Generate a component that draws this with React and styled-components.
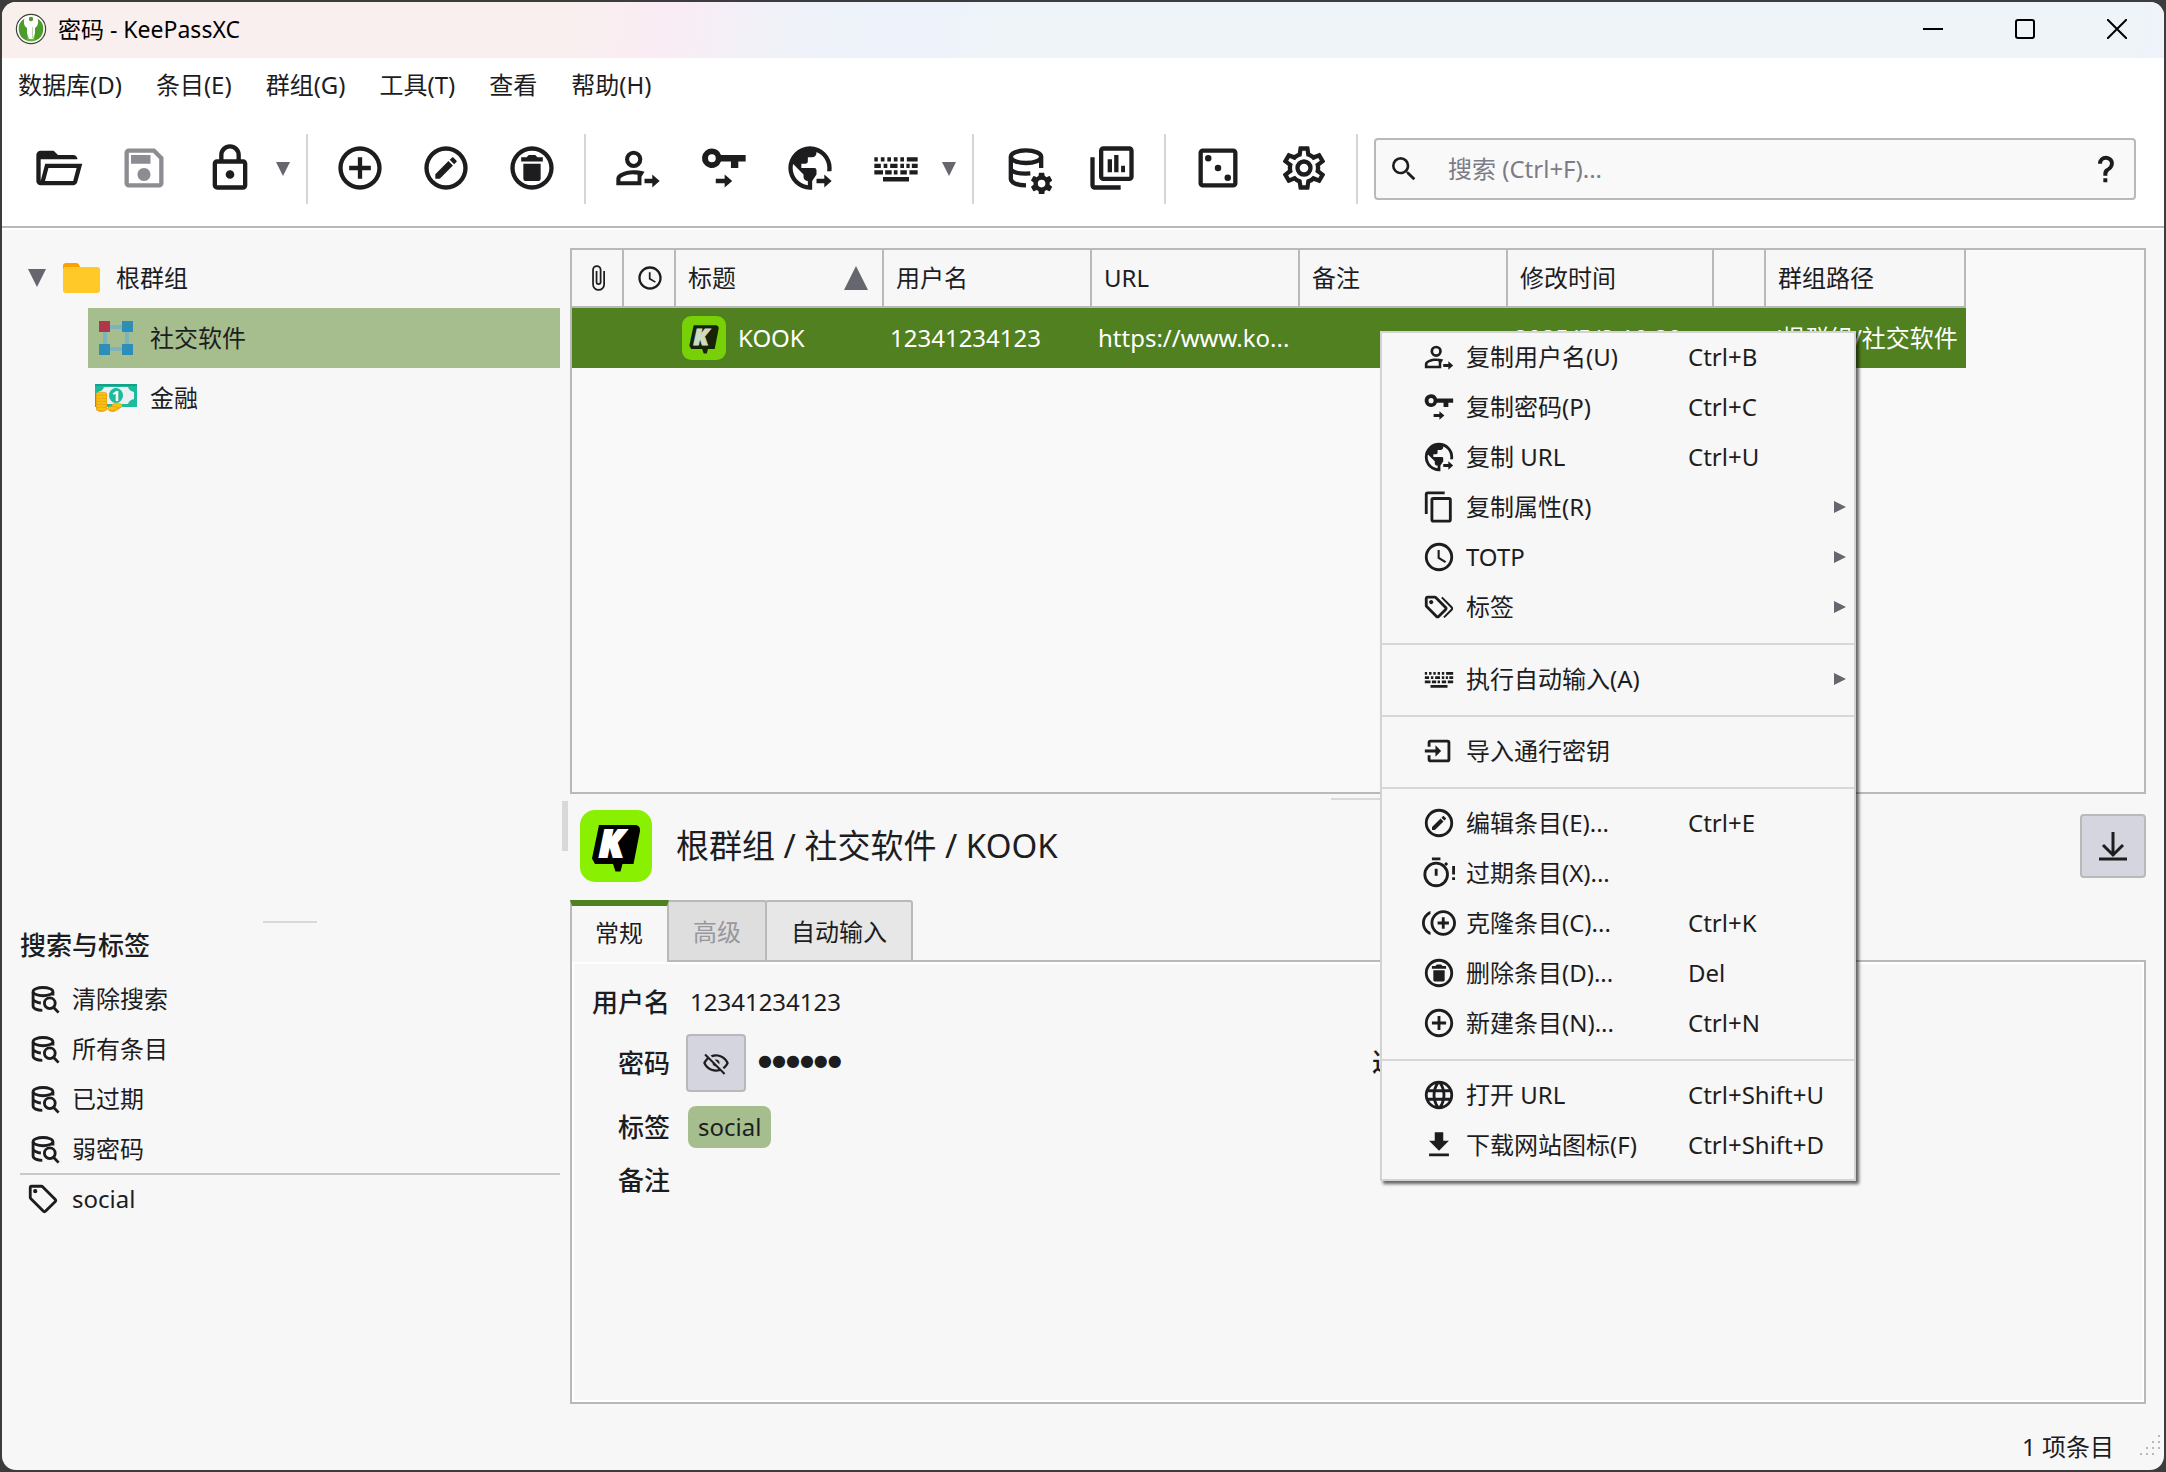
import React from 'react'
import styled, { createGlobalStyle, css } from 'styled-components'

const GlobalStyle = createGlobalStyle`
  * {
    box-sizing: border-box;
  }
  body {
    margin: 0;
    background: #3c3c3c;
    color: #1d1d1f;
    font-family: 'Noto Sans', 'Noto Sans CJK SC', sans-serif;
    font-size: 24px;
    line-height: 36px;
  }
  button, input {
    font: inherit;
    color: inherit;
  }
`

const Desktop = styled.div`
  min-height: 100vh;
  padding: 2px;
  display: flex;
`

const Window = styled.div`
  position: relative;
  flex: 1;
  min-width: 0;
  display: flex;
  flex-direction: column;
  overflow: hidden;
  border-radius: 14px;
  background: #f7f7f7;
`

const PlainButton = styled.button`
  display: flex;
  align-items: center;
  border: 0;
  padding: 0;
  background: none;
  white-space: nowrap;
  text-align: left;
`

/* title bar */

const TitleBar = styled.header`
  display: flex;
  align-items: center;
  height: 56px;
  padding: 0 1px 2px 13px;
  background: linear-gradient(100deg, #f9f0ee 0%, #f9efee 26%, #f9ecf5 31%, #f0f2f8 36%, #edf2fb 42%, #eef4f8 46%, #eef4f8 98%, #eff2fa 100%);
`

const Title = styled.h1`
  flex: 1;
  margin: 0 0 0 11px;
  font-size: 23px;
  font-weight: 400;
  color: #000;
`

const WindowButton = styled(PlainButton)`
  justify-content: center;
  width: 92px;
  height: 54px;
`

/* menu bar and tool bar */

const MenuBar = styled.nav`
  display: flex;
  height: 54px;
  background: #fff;
`

const MenuBarItem = styled(PlainButton)`
  padding: 0 18px 0 16px;
`

const ToolBar = styled.div`
  display: flex;
  align-items: center;
  height: 116px;
  padding: 0 28px 0 13px;
  background: #fff;
  border-bottom: 2px solid #b9b9b9;
  box-shadow: 0 2px 0 #fff;
`

const ToolButton = styled(PlainButton)`
  justify-content: center;
  width: 86px;
  height: 80px;
  padding-bottom: 2px;
  color: #1d1d1f;
  &:disabled {
    color: #8c8c92;
  }
`

const DropButton = styled(PlainButton)`
  width: 24px;
  height: 80px;
  padding-left: 3px;
`

const Divider = styled.div`
  width: 2px;
  height: 70px;
  margin: 0 9px;
  background: #d6d6d6;
`

const SearchBox = styled.label`
  flex: 1;
  display: flex;
  align-items: center;
  height: 62px;
  margin-left: 7px;
  padding: 0 12px;
  background: #f9f9f9;
  border: 2px solid #b9b9b9;
  border-radius: 4px;
`

const SearchInput = styled.input`
  flex: 1;
  min-width: 0;
  margin-left: 28px;
  padding: 0;
  border: 0;
  outline: 0;
  background: none;
  &::placeholder {
    color: #7c7c86;
    opacity: 1;
  }
`

/* body */

const Body = styled.div`
  flex: 1;
  display: grid;
  grid-template-columns: 540px 10px minmax(0, 1fr);
  padding: 20px 18px 0;
`

const SideColumn = styled.aside`
  display: grid;
  grid-template-rows: 7fr 2px 5fr;
`

const MainColumn = styled.main`
  display: grid;
  grid-template-rows: 91fr 10px 100fr;
  min-width: 0;
`

const Handle = styled.div`
  place-self: center;
  width: 54px;
  height: 2px;
  background: #d9d9d9;
  ${p => p.$vertical && css`
    width: 6px;
    height: 50px;
    background: #d7d7dc;
    border: 2px solid #d9d9d9;
    border-width: 0 2px;
  `}
`

const Tree = styled.div`
  display: flex;
  flex-direction: column;
`

const TreeRow = styled(PlainButton)`
  gap: 12px;
  height: 60px;
  padding-left: ${p => (p.$child ? 6 : 8)}px;
  margin-left: ${p => (p.$child ? 68 : 0)}px;
  background: ${p => (p.$selected ? '#a6be8e' : 'none')};
  > svg:first-child:not(:last-of-type) {
    margin-right: 2px;
  }
`

const TagsTitle = styled.h2`
  margin: 0 0 8px;
  font-size: 26px;
  font-weight: 500;
  line-height: 44px;
`

const TagRow = styled(PlainButton)`
  width: 100%;
  height: 50px;
  gap: 12px;
  padding-left: 6px;
  border-bottom: 2px solid ${p => (p.$last ? '#c8c8ce' : 'transparent')};
`

/* entry list */

const ListBox = styled.section`
  border: 2px solid #b9b9b9;
  background: #f9f9f9;
  overflow: hidden;
`

const Table = styled.table`
  width: 1394px;
  table-layout: fixed;
  border-collapse: separate;
  border-spacing: 0;
`

const HeadCell = styled.th`
  height: 58px;
  padding: 0 14px 0 12px;
  font-weight: 400;
  text-align: left;
  white-space: nowrap;
  background: #f7f7f7;
  border-right: 2px solid #b9b9b9;
  border-bottom: 2px solid #b9b9b9;
  ${p => p.$icon && css`
    padding: 0 10px 0 12px;
  `}
`

const HeadContent = styled.div`
  display: flex;
  align-items: center;
  justify-content: ${p => (p.$center ? 'center' : 'space-between')};
`

const Cell = styled.td`
  height: 60px;
  padding: 0 6px;
  color: #fff;
  white-space: nowrap;
  background: #50801f;
`

const TitleCell = styled.div`
  display: flex;
  align-items: center;
  gap: 12px;
`

/* entry preview */

const Preview = styled.section`
  display: flex;
  flex-direction: column;
`

const PreviewHeader = styled.div`
  display: flex;
  align-items: center;
  gap: 24px;
  padding: 6px 0 18px 10px;
`

const PreviewTitle = styled.h2`
  flex: 1;
  margin: 0;
  font-size: 33px;
  line-height: 48px;
  font-weight: 400;
`

const GreyButton = styled(PlainButton)`
  justify-content: center;
  width: ${p => p.$width}px;
  height: ${p => p.$height}px;
  background: #d5d5df;
  border: 2px solid #b9b9b9;
  border-radius: 4px;
`

const Tabs = styled.div`
  display: flex;
  margin-bottom: -2px;
`

const Tab = styled(PlainButton)`
  height: 62px;
  padding: 2px 24px 0;
  margin-left: -2px;
  background: #e7e7e7;
  border: 2px solid #b9b9b9;
  border-radius: 3px 3px 0 0;
  &:disabled {
    color: #98989c;
    background: #dedede;
  }
  ${p => p.$active && css`
    position: relative;
    margin-left: 0;
    padding: 0 24px 2px 23px;
    background: #f7f7f7;
    border-width: 6px 2px 0;
    border-top-color: #50801f;
    border-radius: 0;
  `}
`

const Pane = styled.div`
  flex: 1;
  display: grid;
  grid-template-columns: 1fr 1fr;
  align-items: start;
  padding-top: 20px;
  background: #f7f7f7;
  border: 2px solid #b9b9b9;
  box-shadow: inset 0 0 0 2px #fff;
`

const Fields = styled.dl`
  display: grid;
  grid-template-columns: 98px 1fr;
  column-gap: 16px;
  row-gap: 14px;
  align-items: center;
  margin: 0;
  padding-top: 2px;
`

const FieldName = styled.dt`
  font-size: 26px;
  font-weight: 500;
  text-align: right;
`

const FieldValue = styled.dd`
  display: flex;
  align-items: center;
  margin: 0;
  padding-left: ${p => p.$indent || 0}px;
`

const ExpiryName = styled.div`
  padding: 62px 0 0 14px;
  font-size: 26px;
  font-weight: 500;
`

const Dots = styled.span`
  margin-left: 12px;
  padding-bottom: 4px;
  font-family: 'DejaVu Sans', sans-serif;
  font-size: 16px;
`

const Tag = styled.span`
  padding: 0 10px;
  line-height: 42px;
  background: #a6be8e;
  border-radius: 8px;
`

const StatusBar = styled.footer`
  display: flex;
  align-items: center;
  justify-content: flex-end;
  height: 66px;
  padding-top: 20px;
`

const StatusText = styled.span`
  margin-right: 26px;
`

/* context menu */

const ContextMenu = styled.div`
  position: absolute;
  top: 329px;
  left: 1378px;
  width: 476px;
  padding-bottom: 8px;
  background: #f7f7f7;
  border: 2px solid #d3d3d3;
  box-shadow: 3px 3px 3px rgba(0, 0, 0, 0.6);
`

const MenuItem = styled(PlainButton)`
  width: 100%;
  height: 50px;
  padding: 0 8px 2px 40px;
`

const MenuLabel = styled.span`
  flex: 0 0 222px;
  margin-left: 10px;
`

const MenuKeys = styled.span`
  flex: 1;
`

const MenuRule = styled.div`
  height: 2px;
  margin: 10px 0;
  background: #d7d7d7;
`

/* icons */

const RING = 'M12,2A10,10 0 0,0 2,12A10,10 0 0,0 12,22A10,10 0 0,0 22,12A10,10 0 0,0 12,2M12,20C7.59,20 4,16.41 4,12C4,7.59 7.59,4 12,4C16.41,4 20,7.59 20,12C20,16.41 16.41,20 12,20Z'
const ARROW = 'M15,17H18.6V15L22,18L18.6,21V19H15Z'
const COG = 'M12,15.5A3.5,3.5 0 0,1 8.5,12A3.5,3.5 0 0,1 12,8.5A3.5,3.5 0 0,1 15.5,12A3.5,3.5 0 0,1 12,15.5M19.43,12.97C19.47,12.65 19.5,12.33 19.5,12C19.5,11.67 19.47,11.34 19.43,11L21.54,9.37C21.73,9.22 21.78,8.95 21.66,8.73L19.66,5.27C19.54,5.05 19.27,4.96 19.05,5.05L16.56,6.05C16.04,5.66 15.5,5.32 14.87,5.07L14.5,2.42C14.46,2.18 14.25,2 14,2H10C9.75,2 9.54,2.18 9.5,2.42L9.13,5.07C8.5,5.32 7.96,5.66 7.44,6.05L4.95,5.05C4.73,4.96 4.46,5.05 4.34,5.27L2.34,8.73C2.21,8.95 2.27,9.22 2.46,9.37L4.57,11C4.53,11.34 4.5,11.67 4.5,12C4.5,12.33 4.53,12.65 4.57,12.97L2.46,14.63C2.27,14.78 2.21,15.05 2.34,15.27L4.34,18.73C4.46,18.95 4.73,19.03 4.95,18.95L7.44,17.94C7.96,18.34 8.5,18.68 9.13,18.93L9.5,21.58C9.54,21.82 9.75,22 10,22H14C14.25,22 14.46,21.82 14.5,21.58L14.87,18.93C15.5,18.67 16.04,18.34 16.56,17.94L19.05,18.95C19.27,19.03 19.54,18.95 19.66,18.73L21.66,15.27C21.78,15.05 21.73,14.78 21.54,14.63L19.43,12.97Z'

const PATHS = {
  open: 'M6.1,10L4,18V8H21A2,2 0 0,0 19,6H12L10,4H4A2,2 0 0,0 2,6V18A2,2 0 0,0 4,20H19C19.9,20 20.7,19.4 20.9,18.5L23.2,10H6.1M19,18H6L7.6,12H20.6L19,18Z',
  save: 'M17 3H5C3.89 3 3 3.9 3 5V19C3 20.1 3.89 21 5 21H19C20.1 21 21 20.1 21 19V7L17 3M19 19H5V5H16.17L19 7.83V19M12 12C10.34 12 9 13.34 9 15S10.34 18 12 18 15 16.66 15 15 13.66 12 12 12M6 6H15V10H6V6Z',
  lock: 'M12,17C10.89,17 10,16.1 10,15C10,13.89 10.89,13 12,13A2,2 0 0,1 14,15A2,2 0 0,1 12,17M18,20V10H6V20H18M18,8A2,2 0 0,1 20,10V20A2,2 0 0,1 18,22H6C4.89,22 4,21.1 4,20V10C4,8.89 4.89,8 6,8H7V6A5,5 0 0,1 12,1A5,5 0 0,1 17,6V8H18M12,3A3,3 0 0,0 9,6V8H15V6A3,3 0 0,0 12,3Z',
  add: RING + 'M13,7H11V11H7V13H11V17H13V13H17V11H13V7Z',
  edit: RING + 'M15.1,7.07C15.24,7.07 15.38,7.12 15.5,7.23L16.77,8.5C17,8.72 17,9.07 16.77,9.28L15.77,10.28L13.72,8.23L14.72,7.23C14.82,7.12 14.96,7.07 15.1,7.07M13.13,8.81L15.19,10.87L9.13,16.93H7.07V14.87L13.13,8.81Z',
  trash: RING + 'M17,7H14.5L13.5,6H10.5L9.5,7H7V9H17V7M9,18H15A1,1 0 0,0 16,17V10H8V17A1,1 0 0,0 9,18Z',
  user: 'M10,4A4,4 0 1,0 10,12A4,4 0 1,0 10,4M10,5.9A2.1,2.1 0 1,1 10,10.1A2.1,2.1 0 1,1 10,5.9ZM9.5,13C11.5,13 13.3,13.2 15,13.7L13.6,16V20H2V17C2,14.3 6.8,13 9.5,13M9.5,14.9C6.9,14.9 3.9,16.3 3.9,17V18.1H11.8V15.1C11.1,15 10.4,14.9 9.5,14.9Z' + ARROW,
  key: 'M6.4,3A4.5,4.5 0 0,1 10.6,6H22V9H18.6V12H15.2V9H10.6A4.5,4.5 0 1,1 6.4,3M6.4,5.7A1.8,1.8 0 1,0 6.4,9.3A1.8,1.8 0 1,0 6.4,5.7ZM8.2,17H12.3V15L15.8,18L12.3,21V19H8.2Z',
  url: 'M12,2A10,10 0 0,0 2,12A10,10 0 0,0 12,22H13V18L15,15V13A1,1 0 0,0 14,12H8V10H10A1,1 0 0,0 11,9V7H13A2,2 0 0,0 15,5V4.59C17.93,5.77 20,8.64 20,12L19.9,13.5H21.9L22,12A10,10 0 0,0 12,2ZM11,19.93C7.05,19.44 4,16.08 4,12C4,11.38 4.08,10.78 4.21,10.21L9,15V16A2,2 0 0,0 11,18Z' + ARROW,
  keyboard: 'M2,7h1.6v2h-1.6zM5,7h1.7v2h-1.7zM8,7h1.7v2h-1.7zM11,7h1.7v2h-1.7zM14,7h1.7v2h-1.7zM17,7h5v2h-5zM2,10h3v2h-3zM6.3,10h1.7v2h-1.7zM9.3,10h3.4v2h-3.4zM14,10h1.7v2h-1.7zM16.8,10h1.5v2h-1.5zM19.3,10h2.7v2h-2.7zM2,13h4v2h-4zM7,13h3v2h-3zM11,13h1.7v2h-1.7zM14,13h3v2h-3zM18.2,13h3.8v2h-3.8zM6,16.2h12v2h-12z',
  reports: 'M8,2H20A2,2 0 0,1 22,4V16A2,2 0 0,1 20,18H8A2,2 0 0,1 6,16V4A2,2 0 0,1 8,2M8,4V16H20V4H8ZM2,7H4V20H16V22H4A2,2 0 0,1 2,20ZM10,8H12V14H10ZM13,6H15V14H13ZM16.2,11H18V14H16.2Z',
  dice: 'M5,3H19A2,2 0 0,1 21,5V19A2,2 0 0,1 19,21H5A2,2 0 0,1 3,19V5A2,2 0 0,1 5,3M5,5V19H19V5H5M7.5,6A1.5,1.5 0 1,1 7.5,9A1.5,1.5 0 1,1 7.5,6M12,10.5A1.5,1.5 0 1,1 12,13.5A1.5,1.5 0 1,1 12,10.5M16.5,15A1.5,1.5 0 1,1 16.5,18A1.5,1.5 0 1,1 16.5,15Z',
  settings: 'M12,8A4,4 0 0,1 16,12A4,4 0 0,1 12,16A4,4 0 0,1 8,12A4,4 0 0,1 12,8M12,10A2,2 0 0,0 10,12A2,2 0 0,0 12,14A2,2 0 0,0 14,12A2,2 0 0,0 12,10M10,22C9.75,22 9.54,21.82 9.5,21.58L9.13,18.93C8.5,18.68 7.96,18.34 7.44,17.94L4.95,18.95C4.73,19.03 4.46,18.95 4.34,18.73L2.34,15.27C2.21,15.05 2.27,14.78 2.46,14.63L4.57,12.97L4.5,12L4.57,11L2.46,9.37C2.27,9.22 2.21,8.95 2.34,8.73L4.34,5.27C4.46,5.05 4.73,4.96 4.95,5.05L7.44,6.05C7.96,5.66 8.5,5.32 9.13,5.07L9.5,2.42C9.54,2.18 9.75,2 10,2H14C14.25,2 14.46,2.18 14.5,2.42L14.87,5.07C15.5,5.32 16.04,5.66 16.56,6.05L19.05,5.05C19.27,4.96 19.54,5.05 19.66,5.27L21.66,8.73C21.79,8.95 21.73,9.22 21.54,9.37L19.43,11L19.5,12L19.43,13L21.54,14.63C21.73,14.78 21.79,15.05 21.66,15.27L19.66,18.73C19.54,18.95 19.27,19.04 19.05,18.95L16.56,17.95C16.04,18.34 15.5,18.68 14.87,18.93L14.5,21.58C14.46,21.82 14.25,22 14,22H10M11.25,4L10.88,6.61C9.68,6.86 8.62,7.5 7.85,8.39L5.44,7.35L4.69,8.65L6.8,10.2C6.4,11.37 6.4,12.64 6.8,13.8L4.68,15.36L5.43,16.66L7.86,15.62C8.63,16.5 9.68,17.14 10.87,17.38L11.24,20H12.76L13.13,17.39C14.32,17.14 15.37,16.5 16.14,15.62L18.57,16.66L19.32,15.36L17.2,13.81C17.6,12.64 17.6,11.37 17.2,10.2L19.31,8.65L18.56,7.35L16.15,8.39C15.38,7.5 14.32,6.86 13.12,6.62L12.75,4H11.25Z',
  search: 'M9.5,3A6.5,6.5 0 0,1 16,9.5C16,11.11 15.41,12.59 14.44,13.73L14.71,14H15.5L20.5,19L19,20.5L14,15.5V14.71L13.73,14.44C12.59,15.41 11.11,16 9.5,16A6.5,6.5 0 0,1 3,9.5A6.5,6.5 0 0,1 9.5,3M9.5,5C7,5 5,7 5,9.5C5,12 7,14 9.5,14C12,14 14,12 14,9.5C14,7 12,5 9.5,5Z',
  help: 'M10,19H13V22H10V19M12,2C17.35,2.22 19.68,7.62 16.5,11.67C15.67,12.67 14.33,13.33 13.67,14.17C13,15 13,16 13,17H10C10,15.33 10,13.92 10.67,12.92C11.33,11.92 12.67,11.33 13.5,10.67C15.92,8.43 15.32,5.26 12,5A3,3 0 0,0 9,8H6A6,6 0 0,1 12,2Z',
  clip: 'M16.5,6V17.5A4,4 0 0,1 12.5,21.5A4,4 0 0,1 8.5,17.5V5A2.5,2.5 0 0,1 11,2.5A2.5,2.5 0 0,1 13.5,5V15.5A1,1 0 0,1 12.5,16.5A1,1 0 0,1 11.5,15.5V6H10V15.5A2.5,2.5 0 0,0 12.5,18A2.5,2.5 0 0,0 15,15.5V5A4,4 0 0,0 11,1A4,4 0 0,0 7,5V17.5A5.5,5.5 0 0,0 12.5,23A5.5,5.5 0 0,0 18,17.5V6H16.5Z',
  clock: RING + 'M12.5,7V12.25L17,14.92L16.25,16.15L11,13V7H12.5Z',
  copy: 'M19,21H8V7H19M19,5H8A2,2 0 0,0 6,7V21A2,2 0 0,0 8,23H19A2,2 0 0,0 21,21V7A2,2 0 0,0 19,5M16,1H4A2,2 0 0,0 2,3V17H4V3H16V1Z',
  tags: 'M6.5 10C7.3 10 8 9.3 8 8.5S7.3 7 6.5 7 5 7.7 5 8.5 5.7 10 6.5 10M9 6L16 13L11 18L4 11V6H9M9 4H4C2.9 4 2 4.9 2 6V11C2 11.6 2.2 12.1 2.6 12.4L9.6 19.4C9.9 19.8 10.4 20 11 20S12.1 19.8 12.4 19.4L17.4 14.4C17.8 14 18 13.5 18 13C18 12.4 17.8 11.9 17.4 11.6L10.4 4.6C10.1 4.2 9.6 4 9 4M13.5 5.7L14.5 4.7L21.4 11.6C21.8 12 22 12.5 22 13S21.8 14.1 21.4 14.4L16 19.8L15 18.8L20.7 13L13.5 5.7Z',
  tag: 'M21.41,11.58L12.41,2.58C12.04,2.21 11.53,2 11,2H4A2,2 0 0,0 2,4V11C2,11.53 2.21,12.04 2.59,12.41L11.59,21.41C11.96,21.79 12.47,22 13,22C13.53,22 14.04,21.79 14.41,21.41L21.41,14.41C21.79,14.04 22,13.53 22,13C22,12.47 21.79,11.96 21.41,11.58M13,20L4,11V4H11L20,13M6.5,5A1.5,1.5 0 1,1 5,6.5A1.5,1.5 0 0,1 6.5,5Z',
  import: 'M6,4H18A2,2 0 0,1 20,6V18A2,2 0 0,1 18,20H6A2,2 0 0,1 4,18V15H6V18H18V6H6V9H4V6A2,2 0 0,1 6,4ZM2,11H9.5V8L13.5,12L9.5,16V13H2Z',
  expire: 'M10,4A9,9 0 1,0 10,22A9,9 0 1,0 10,4M10,6A7,7 0 1,1 10,20A7,7 0 1,1 10,6ZM7,1H13V3H7ZM9,9H11V14H9ZM15.6,5.6L17,4.2L18.5,5.7L17.1,7.1ZM21.3,7H23.3V13H21.3ZM21.3,15H23.3V17H21.3Z',
  clone: 'M16,8H14V11H11V13H14V16H16V13H19V11H16M2,12C2,9.21 3.64,6.8 6,5.68V3.5C2.5,4.76 0,8.09 0,12C0,15.91 2.5,19.24 6,20.5V18.32C3.64,17.2 2,14.79 2,12M15,3C10.04,3 6,7.04 6,12C6,16.96 10.04,21 15,21C19.96,21 24,16.96 24,12C24,7.04 19.96,3 15,3M15,19C11.14,19 8,15.86 8,12C8,8.14 11.14,5 15,5C18.86,5 22,8.14 22,12C22,15.86 18.86,19 15,19Z',
  web: 'M16.36,14C16.44,13.34 16.5,12.68 16.5,12C16.5,11.32 16.44,10.66 16.36,10H19.74C19.9,10.64 20,11.31 20,12C20,12.69 19.9,13.36 19.74,14M14.59,19.56C15.19,18.45 15.65,17.25 15.97,16H18.92C17.96,17.65 16.43,18.93 14.59,19.56M14.34,14H9.66C9.56,13.34 9.5,12.68 9.5,12C9.5,11.32 9.56,10.65 9.66,10H14.34C14.43,10.65 14.5,11.32 14.5,12C14.5,12.68 14.43,13.34 14.34,14M12,19.96C11.17,18.76 10.5,17.43 10.09,16H13.91C13.5,17.43 12.83,18.76 12,19.96M8,8H5.08C6.03,6.34 7.57,5.06 9.4,4.44C8.8,5.55 8.35,6.75 8,8M5.08,16H8C8.35,17.25 8.8,18.45 9.4,19.56C7.57,18.93 6.03,17.65 5.08,16M4.26,14C4.1,13.36 4,12.69 4,12C4,11.31 4.1,10.64 4.26,10H7.64C7.56,10.66 7.5,11.32 7.5,12C7.5,12.68 7.56,13.34 7.64,14M12,4.03C12.83,5.23 13.5,6.57 13.91,8H10.09C10.5,6.57 11.17,5.23 12,4.03M18.92,8H15.97C15.65,6.75 15.19,5.55 14.59,4.44C16.43,5.07 17.96,6.34 18.92,8M12,2C6.47,2 2,6.5 2,12A10,10 0 0,0 12,22A10,10 0 0,0 22,12A10,10 0 0,0 12,2Z',
  download: 'M5,20H19V18H5M19,9H15V3H9V9H5L12,16L19,9Z',
  eyeOff: 'M2,5.27L3.28,4L20,20.72L18.73,22L15.65,18.92C14.5,19.3 13.28,19.5 12,19.5C7,19.5 2.73,16.39 1,12C1.69,10.24 2.79,8.69 4.19,7.46L2,5.27M12,9A3,3 0 0,1 15,12C15,12.35 14.94,12.69 14.83,13L11,9.17C11.31,9.06 11.65,9 12,9M12,4.5C17,4.5 21.27,7.61 23,12C22.18,14.08 20.79,15.88 19,17.19L17.58,15.76C18.94,14.82 20.06,13.54 20.82,12C19.17,8.64 15.76,6.5 12,6.5C10.91,6.5 9.84,6.68 8.84,7L7.3,5.47C8.74,4.85 10.33,4.5 12,4.5M3.18,12C4.83,15.36 8.24,17.5 12,17.5C12.69,17.5 13.37,17.43 14,17.29L11.72,15C10.29,14.85 9.15,13.71 9,12.28L5.6,8.87C4.61,9.72 3.78,10.78 3.18,12Z'
}

const Svg = styled.svg`
  display: block;
  flex: none;
`

const Icon = ({ name, size = 34 }) => (
  <Svg width={size} height={size} viewBox="0 0 24 24" fill="currentColor" fillRule="evenodd" aria-hidden="true">
    <path d={PATHS[name]} />
  </Svg>
)

const DatabaseIcon = ({ size, cog }) => (
  <Svg width={size} height={size} viewBox="0 0 24 24" fill="none" stroke="currentColor" strokeWidth="2" aria-hidden="true">
    <ellipse cx="12" cy="6.8" rx="7" ry="2.9" />
    <path d={cog ? 'M5,7V17C5,18.8 7.8,20 12,20M19,7V12M5,12.8C6,14 9,14.8 14,14.5' : 'M5,7V17C5,18.8 7.8,20 11.5,20M19,7V9.5M5,12.5C6.2,14 7.8,14.6 10.5,14.8'} />
    {cog ? (
      <g transform="translate(13.2 13.2) scale(0.5)" fill="currentColor" fillRule="evenodd" stroke="none">
        <path d={COG} />
      </g>
    ) : (
      <path d="M16.8,11.2A3.8,3.8 0 1,1 16.8,18.8A3.8,3.8 0 1,1 16.8,11.2M19.4,17.8L23,21.6" />
    )}
  </Svg>
)

const Triangle = ({ dir, size }) => (
  <Svg width={size} height={size} viewBox="0 0 10 10" fill="#65666e" aria-hidden="true">
    <path d={{ down: 'M0,0H10L5,10Z', up: 'M0,10H10L5,0Z', right: 'M0,0V10L10,5Z' }[dir]} />
  </Svg>
)

const AppLogo = () => (
  <Svg width="32" height="32" viewBox="0 0 32 32" aria-hidden="true">
    <circle cx="16" cy="16" r="14.6" fill="#fff" stroke="#3a4438" strokeWidth="1.2" />
    <path d="M9.5,5.5A12.4,12.4 0 0,0 12,27.7V15C9,13 8.2,9.5 9.5,5.5ZM22.5,5.5A12.4,12.4 0 0,1 20,27.7V15C23,13 23.8,9.5 22.5,5.5Z" fill="#4d9a2d" />
    <path d="M12,20V27.7C14.5,28.6 17.5,28.6 20,27.7V20L18,26H14Z" fill="#62b52f" />
    <circle cx="16" cy="6" r="2.2" fill="#4d9a2d" />
    <path d="M17.5,14V25" stroke="#b9d5ac" strokeWidth="1" />
  </Svg>
)

const KookLogo = ({ size, faded }) => (
  <Svg width={size} height={size} viewBox="0 0 72 72" aria-hidden="true" opacity={faded ? 0.72 : 1}>
    <rect width="72" height="72" rx="15" fill="#88f000" />
    <path d="M19,15H56Q60.500,16 60,21L53.500,54H42.500L40.500,61.500H35.500L33,54H15L12,48.500Z" fill="#000" />
    <text x="19" y="47" fill="#fff" stroke="#fff" strokeWidth="2" fontFamily="Open Sans, sans-serif" fontWeight="800" fontStyle="italic" fontSize="37">K</text>
  </Svg>
)

const FolderIcon = () => (
  <Svg width="44" height="44" viewBox="0 0 44 44" aria-hidden="true">
    <path d="M6,7H16Q19,7 20,11H37V20H3V10Q3,7 6,7Z" fill="#ffa000" />
    <rect x="3" y="11" width="37" height="26" rx="3" fill="#ffca28" />
  </Svg>
)

const NetworkIcon = () => (
  <Svg width="44" height="44" viewBox="0 0 44 44" aria-hidden="true">
    <path d="M11,11H33V33H11Z" fill="none" stroke="#7fb3bb" strokeWidth="4" />
    <path d="M28,5H39V16H28ZM5,28H16V39H5ZM28,28H39V39H28Z" fill="#2d8fb8" />
    <path d="M5,5H16V16H5Z" fill="#b0364d" />
  </Svg>
)

const MoneyIcon = () => (
  <Svg width="44" height="44" viewBox="0 0 44 44" aria-hidden="true">
    <rect x="1" y="8" width="42" height="23" fill="#1abc9c" />
    <rect x="1" y="8" width="42" height="2" fill="#16a085" />
    <path d="M10,11H34Q35,15 40,16V23Q35,24 34,28H10Q9,24 4,23V16Q9,15 10,11Z" fill="#ecf0f1" />
    <ellipse cx="22" cy="19.500" rx="7" ry="7.500" fill="#1abc9c" />
    <text x="22" y="25" textAnchor="middle" fill="#fff" fontFamily="Open Sans, sans-serif" fontWeight="700" fontSize="15">1</text>
    <path d="M2,18V34Q7,38 13,34V18Z" fill="#f39c12" />
    {[18, 21, 24, 27, 30, 33].map(y => <ellipse key={y} cx="7.500" cy={y} rx="5.500" ry="1.900" fill="#f1c40f" stroke="#f39c12" strokeWidth="0.700" />)}
    <path d="M14,32V34Q18,38 23.500,34L28,31V29L20,31Z" fill="#f39c12" />
    <ellipse cx="23" cy="29.500" rx="5" ry="2.200" fill="#f1c40f" stroke="#f39c12" strokeWidth="0.700" />
    <ellipse cx="18.500" cy="32.500" rx="5" ry="2" fill="#f1c40f" stroke="#f39c12" strokeWidth="0.700" />
  </Svg>
)

const DownIcon = () => (
  <Svg width="30" height="30" viewBox="0 0 30 30" fill="none" stroke="currentColor" strokeWidth="3" aria-hidden="true">
    <path d="M15,1V24M5,14L15,24L25,14M1,28H29" />
  </Svg>
)

const SizeGrip = () => (
  <Svg width="24" height="24" viewBox="0 0 24 24" fill="#b9b9b9" aria-hidden="true">
    {[[18, 0], [12, 6], [18, 6], [6, 12], [12, 12], [18, 12], [0, 18], [6, 18], [12, 18]].map(([x, y]) => (
      <rect key={`${x}-${y}`} x={x} y={y} width="2" height="2" />
    ))}
  </Svg>
)

const menus = ['数据库(D)', '条目(E)', '群组(G)', '工具(T)', '查看', '帮助(H)']

const columns = [
  { width: 52, icon: 'clip', name: '附件' },
  { width: 52, icon: 'clock', name: 'TOTP' },
  { width: 208, label: '标题', sorted: true },
  { width: 208, label: '用户名' },
  { width: 208, label: 'URL' },
  { width: 208, label: '备注' },
  { width: 206, label: '修改时间' },
  { width: 52 },
  { width: 200, label: '群组路径' }
]

const searches = ['清除搜索', '所有条目', '已过期', '弱密码']

const contextMenu = [
  { icon: 'user', label: '复制用户名(U)', keys: 'Ctrl+B' },
  { icon: 'key', label: '复制密码(P)', keys: 'Ctrl+C' },
  { icon: 'url', label: '复制 URL', keys: 'Ctrl+U' },
  { icon: 'copy', label: '复制属性(R)', sub: true },
  { icon: 'clock', label: 'TOTP', sub: true },
  { icon: 'tags', label: '标签', sub: true },
  null,
  { icon: 'keyboard', label: '执行自动输入(A)', sub: true },
  null,
  { icon: 'import', label: '导入通行密钥' },
  null,
  { icon: 'edit', label: '编辑条目(E)...', keys: 'Ctrl+E' },
  { icon: 'expire', label: '过期条目(X)...' },
  { icon: 'clone', label: '克隆条目(C)...', keys: 'Ctrl+K' },
  { icon: 'trash', label: '删除条目(D)...', keys: 'Del' },
  { icon: 'add', label: '新建条目(N)...', keys: 'Ctrl+N' },
  null,
  { icon: 'web', label: '打开 URL', keys: 'Ctrl+Shift+U' },
  { icon: 'download', label: '下载网站图标(F)', keys: 'Ctrl+Shift+D' }
]

const Tool = ({ name, label, disabled }) => (
  <ToolButton aria-label={label} disabled={disabled}>
    {name === 'database' ? <DatabaseIcon size={52} cog /> : <Icon name={name} size={52} />}
  </ToolButton>
)

const Drop = ({ label }) => (
  <DropButton aria-label={label}>
    <Triangle dir="down" size={14} />
  </DropButton>
)

const EntryList = () => (
  <ListBox>
    <Table>
      <colgroup>
        {columns.map((c, i) => <col key={i} width={c.width} />)}
      </colgroup>
      <thead>
        <tr>
          {columns.map((c, i) => (
            <HeadCell key={i} aria-label={c.name} $icon={!!c.icon}>
              <HeadContent $center={!!c.icon}>
                {c.icon ? <Icon name={c.icon} size={28} /> : c.label}
                {c.sorted && <Triangle dir="up" size={24} />}
              </HeadContent>
            </HeadCell>
          ))}
        </tr>
      </thead>
      <tbody>
        <tr>
          <Cell />
          <Cell />
          <Cell>
            <TitleCell>
              <KookLogo size={44} faded />
              KOOK
            </TitleCell>
          </Cell>
          <Cell>12341234123</Cell>
          <Cell>https://www.ko...</Cell>
          <Cell />
          <Cell>2025/5/2 10:20</Cell>
          <Cell />
          <Cell>/根群组/社交软件</Cell>
        </tr>
      </tbody>
    </Table>
  </ListBox>
)

const EntryPreview = () => (
  <Preview>
    <PreviewHeader>
      <KookLogo size={72} />
      <PreviewTitle>根群组 / 社交软件 / KOOK</PreviewTitle>
      <GreyButton $width={66} $height={64} aria-label="关闭预览"><DownIcon /></GreyButton>
    </PreviewHeader>
    <Tabs role="tablist">
      <Tab role="tab" aria-selected="true" $active>常规</Tab>
      <Tab role="tab" disabled>高级</Tab>
      <Tab role="tab">自动输入</Tab>
    </Tabs>
    <Pane>
      <Fields>
        <FieldName>用户名</FieldName>
        <FieldValue $indent={4}>12341234123</FieldValue>
        <FieldName>密码</FieldName>
        <FieldValue>
          <GreyButton $width={60} $height={58} aria-label="显示密码"><Icon name="eyeOff" size={28} /></GreyButton>
          <Dots>●●●●●●</Dots>
        </FieldValue>
        <FieldName>标签</FieldName>
        <FieldValue $indent={2}><Tag>social</Tag></FieldValue>
        <FieldName>备注</FieldName>
        <FieldValue />
      </Fields>
      <ExpiryName>过期</ExpiryName>
    </Pane>
  </Preview>
)

export default function App() {
  return (
    <Desktop>
      <GlobalStyle />
      <Window>
        <TitleBar>
          <AppLogo />
          <Title>密码 - KeePassXC</Title>
          <WindowButton aria-label="最小化">
            <Svg width="20" height="20" viewBox="0 0 20 20" stroke="#000" strokeWidth="2"><path d="M0,10H20" /></Svg>
          </WindowButton>
          <WindowButton aria-label="最大化">
            <Svg width="20" height="20" viewBox="0 0 20 20" fill="none" stroke="#000" strokeWidth="2"><rect x="1" y="1" width="18" height="18" rx="2" /></Svg>
          </WindowButton>
          <WindowButton aria-label="关闭">
            <Svg width="20" height="20" viewBox="0 0 20 20" stroke="#000" strokeWidth="2"><path d="M0,0L20,20M20,0L0,20" /></Svg>
          </WindowButton>
        </TitleBar>
        <MenuBar>
          {menus.map(m => <MenuBarItem key={m}>{m}</MenuBarItem>)}
        </MenuBar>
        <ToolBar>
          <Tool name="open" label="打开数据库" />
          <Tool name="save" label="保存数据库" disabled />
          <Tool name="lock" label="锁定数据库" />
          <Drop label="锁定选项" />
          <Divider />
          <Tool name="add" label="新建条目" />
          <Tool name="edit" label="编辑条目" />
          <Tool name="trash" label="删除条目" />
          <Divider />
          <Tool name="user" label="复制用户名" />
          <Tool name="key" label="复制密码" />
          <Tool name="url" label="复制 URL" />
          <Tool name="keyboard" label="自动输入" />
          <Drop label="自动输入选项" />
          <Divider />
          <Tool name="database" label="数据库设置" />
          <Tool name="reports" label="数据库报告" />
          <Divider />
          <Tool name="dice" label="密码生成器" />
          <Tool name="settings" label="设置" />
          <Divider />
          <SearchBox>
            <Icon name="search" size={32} />
            <SearchInput type="text" placeholder="搜索 (Ctrl+F)..." aria-label="搜索" />
            <PlainButton aria-label="搜索帮助"><Icon name="help" size={32} /></PlainButton>
          </SearchBox>
        </ToolBar>
        <Body>
          <SideColumn>
            <Tree>
              <TreeRow>
                <Triangle dir="down" size={18} />
                <FolderIcon />
                根群组
              </TreeRow>
              <TreeRow $child $selected><NetworkIcon />社交软件</TreeRow>
              <TreeRow $child><MoneyIcon />金融</TreeRow>
            </Tree>
            <Handle />
            <div>
              <TagsTitle>搜索与标签</TagsTitle>
              {searches.map((s, i) => (
                <TagRow key={s} $last={i === searches.length - 1}>
                  <DatabaseIcon size={34} />
                  {s}
                </TagRow>
              ))}
              <TagRow><Icon name="tag" />social</TagRow>
            </div>
          </SideColumn>
          <Handle $vertical />
          <MainColumn>
            <EntryList />
            <Handle />
            <EntryPreview />
          </MainColumn>
        </Body>
        <StatusBar>
          <StatusText>1 项条目</StatusText>
          <SizeGrip />
        </StatusBar>
        <ContextMenu role="menu">
          {contextMenu.map((item, i) => item ? (
            <MenuItem key={item.label} role="menuitem">
              <Icon name={item.icon} />
              <MenuLabel>{item.label}</MenuLabel>
              <MenuKeys>{item.keys}</MenuKeys>
              {item.sub && <Triangle dir="right" size={12} />}
            </MenuItem>
          ) : <MenuRule key={i} />)}
        </ContextMenu>
      </Window>
    </Desktop>
  )
}
